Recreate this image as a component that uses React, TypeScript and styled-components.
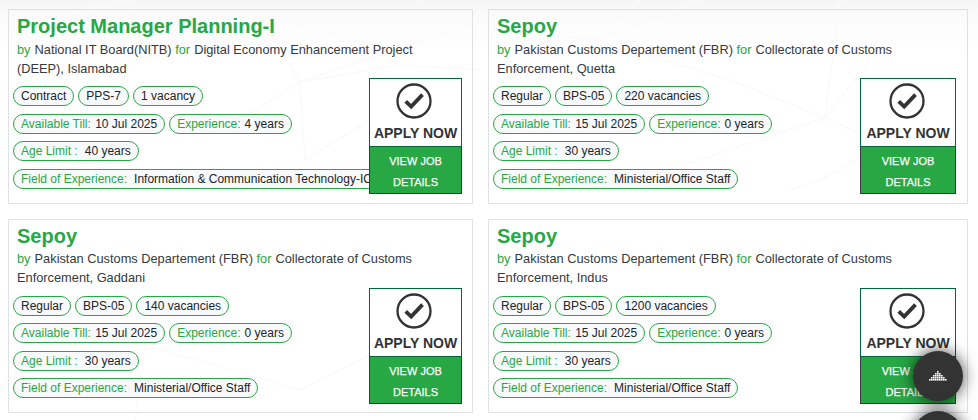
import React from "react";
import styled, { createGlobalStyle } from "styled-components";

const Global = createGlobalStyle`
  * { box-sizing: border-box; }
  body { margin: 0; background: #fff; font-family: "Liberation Sans", Arial, sans-serif; color: #212529; overflow: hidden; }
`;

const Page = styled.main`
  position: relative;
  width: 978px;
  height: 420px;
  overflow: hidden;
  padding: 9.2px 10px 0 8px;
  background: linear-gradient(#f6f6f6 0, #fcfcfc 22px, #fff 60px);
`;

const Network = styled.svg`
  position: absolute;
  inset: 0;
  fill: none;
  stroke: #fafafa;
  stroke-width: 1.5;
`;

const Grid = styled.section`
  position: relative;
  display: grid;
  grid-template-columns: 465px 480px;
  grid-auto-rows: 194.4px;
  gap: 15.3px 15px;
`;

const Card = styled.article`
  position: relative;
  border: 1px solid #dee2e6;
  padding: 4px 0 0 4px;
`;

const Title = styled.h2`
  margin: 0 0 0 4px;
  font-size: 20px;
  line-height: 24px;
  font-weight: 700;
  color: #28a745;
`;

const Summary = styled.p`
  margin: 1.4px 0 0 4px;
  width: 420px;
  height: 39px;
  font-size: 12.8px;
  line-height: 19px;
  color: #343a40;
`;

const Green = styled.span`
  color: #28a745;
  margin-right: 0.5px;
`;

const Tags = styled.div`
  display: flex;
  flex-direction: column;
  gap: 7.5px;
  margin-top: 7.6px;
`;

const TagRow = styled.div`
  display: flex;
  gap: 4px;
  height: 20px;
`;

const Tag = styled.span`
  height: 20px;
  flex: none;
  border: 1px solid #28a745;
  border-radius: 10px;
  background: #f8f9fa;
  padding: 0 7px;
  font-size: 12px;
  line-height: 18px;
  white-space: nowrap;
`;

const Label = styled.span<{ $gap: number }>`
  color: #28a745;
  margin-right: ${(p) => p.$gap}px;
`;

const Actions = styled.div<{ $wide?: boolean }>`
  position: absolute;
  top: 68px;
  right: ${(p) => (p.$wide ? 11 : 10)}px;
  width: ${(p) => (p.$wide ? 96 : 93)}px;
  height: 116px;
  display: flex;
  flex-direction: column;
`;

const Apply = styled.div`
  height: 69px;
  flex: none;
  display: flex;
  flex-direction: column;
  align-items: center;
  padding-top: 4px;
  border: 1px solid #006837;
  background: #fff;
  color: #333;
  font-size: 14px;
  line-height: 16px;
  font-weight: 700;
  white-space: nowrap;

  svg { display: block; margin: 0 3px 6px 0; }
`;

const Details = styled.div`
  height: 47px;
  border: 1px solid #343a40;
  border-top: 0;
  background: #28a745;
  color: #f8f9fa;
  font-size: 11px;
  line-height: 21px;
  padding-top: 4px;
  text-align: center;
  -webkit-text-stroke: 0.25px #f8f9fa;
`;

const Floating = styled.div<{ $top: number }>`
  position: absolute;
  left: 913px;
  top: ${(p) => p.$top}px;
  width: 50px;
  height: 50px;
  border-radius: 50%;
  background: #333;
  box-shadow: 0 0 16px rgba(0, 0, 0, 0.75);
  display: flex;
  align-items: center;
  justify-content: center;
`;

type Job = { title: string; org: string; dept: string; tags: string[]; till: string; exp: string; age: string; field: string };

const customs = "Pakistan Customs Departement (FBR)";
const sepoy = (place: string, vacancies: string): Job => ({
  title: "Sepoy",
  org: customs,
  dept: `Collectorate of Customs Enforcement, ${place}`,
  tags: ["Regular", "BPS-05", vacancies],
  till: "15 Jul 2025",
  exp: "0 years",
  age: "30 years",
  field: "Ministerial/Office Staff",
});

const jobs: Job[] = [
  {
    title: "Project Manager Planning-I",
    org: "National IT Board(NITB)",
    dept: "Digital Economy Enhancement Project (DEEP), Islamabad",
    tags: ["Contract", "PPS-7", "1 vacancy"],
    till: "10 Jul 2025",
    exp: "4 years",
    age: "40 years",
    field: "Information & Communication Technology-ICT",
  },
  sepoy("Quetta", "220 vacancies"),
  sepoy("Gaddani", "140 vacancies"),
  sepoy("Indus", "1200 vacancies"),
];

const CheckIcon = () => (
  <svg width="36" height="36" viewBox="0 0 36 36" fill="none" stroke="#333">
    <circle cx="18" cy="18" r="16.5" strokeWidth="2.3" />
    <path d="M9.7 18.3 L15.2 23.6 L26.5 11.6" strokeWidth="3.8" />
  </svg>
);

const dotRows = [1, 3, 5, 7, 9];

const DotsIcon = () => (
  <svg width="18" height="10" viewBox="0 0 18 10" fill="#fff">
    {dotRows.flatMap((n, r) =>
      Array.from({ length: n }, (_, i) => (
        <rect key={`${r}-${i}`} x={9 - n + i * 2} y={r * 2} width="1.6" height="1.6" />
      ))
    )}
  </svg>
);

const JobCard = ({ job, wide }: { job: Job; wide: boolean }) => (
  <Card>
    <Title>{job.title}</Title>
    <Summary>
      <Green>by</Green> {job.org} <Green>for</Green> {job.dept}
    </Summary>
    <Tags>
      <TagRow>{job.tags.map((t) => <Tag key={t}>{t}</Tag>)}</TagRow>
      <TagRow>
        <Tag><Label $gap={4.3}>Available Till:</Label>{job.till}</Tag>
        <Tag><Label $gap={4}>Experience:</Label>{job.exp}</Tag>
      </TagRow>
      <TagRow><Tag><Label $gap={7}>Age Limit :</Label>{job.age}</Tag></TagRow>
      <TagRow><Tag><Label $gap={7}>Field of Experience:</Label>{job.field}</Tag></TagRow>
    </Tags>
    <Actions $wide={wide}>
      <Apply><CheckIcon />APPLY NOW</Apply>
      <Details>VIEW JOB<br />DETAILS</Details>
    </Actions>
  </Card>
);

export default function App() {
  return (
    <>
      <Global />
      <Page>
        <Network width="978" height="420">
          <path d="M0 30 L125 0 L148 60 L260 15 L300 82 L240 120 M260 15 L395 50 L480 20 M300 82 L395 50 L420 0 M300 82 L305 160 L370 120 M148 60 L130 0 M300 82 L400 65 L480 70 M480 30 L595 40 L700 0 M595 40 L640 0 M595 40 L730 80 L825 118 L870 60 M825 118 L885 145 L820 180 L790 190 M825 118 L840 0 M640 180 L825 118 M0 390 L60 320 L145 345 L135 420 M145 345 L300 390 L420 330" />
        </Network>
        <Grid>
          {jobs.map((job, i) => <JobCard key={i} job={job} wide={i % 2 === 1} />)}
        </Grid>
        <Floating $top={351}><DotsIcon /></Floating>
        <Floating $top={411} />
      </Page>
    </>
  );
}
